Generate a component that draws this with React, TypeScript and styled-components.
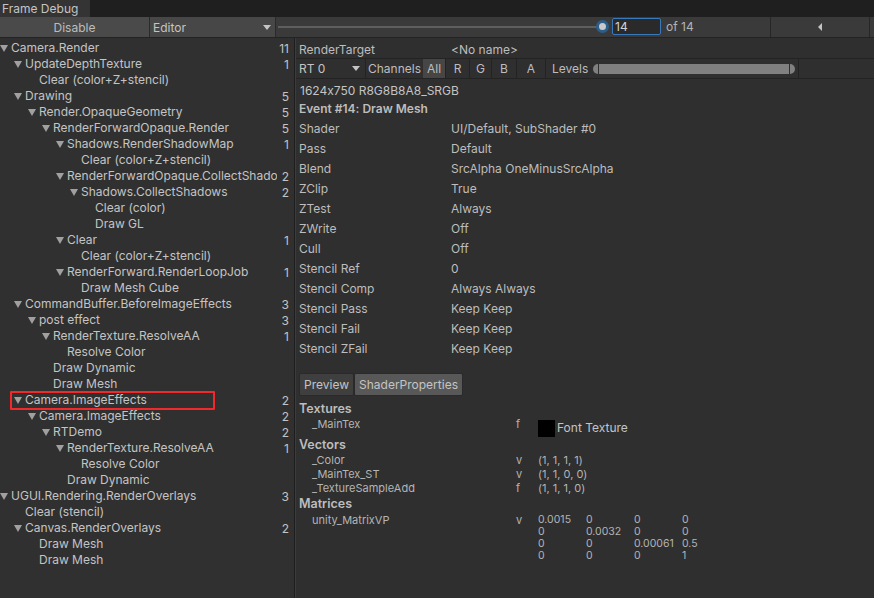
import React from "react";
import styled, { createGlobalStyle } from "styled-components";

const Global = createGlobalStyle`
  html, body { margin: 0; padding: 0; background: #2e2e2e; }
  body {
    font-family: Inter, "Noto Sans", "DejaVu Sans", sans-serif;
    font-size: 12px;
    color: #c4c4c4;
    font-feature-settings: "calt" 0;
  }
  * { box-sizing: border-box; }
`;

const Window = styled.div`
  width: 874px;
  height: 598px;
  display: flex;
  flex-direction: column;
  background: #2e2e2e;
  overflow: hidden;
`;

const TitleBar = styled.div`
  height: 17px;
  display: flex;
  background: #1f1f1f;
`;

const Tab = styled.div`
  width: 90px;
  height: 17px;
  background: #343434;
  color: #c4c4c4;
  padding-left: 2px;
  line-height: 17px;
  font-size: 12px;
`;

const Toolbar = styled.div`
  height: 21px;
  display: flex;
  align-items: stretch;
  background: #3a3a3a;
  border-bottom: 1px solid #232323;
`;

const ToolButton = styled.div<{ $w: number }>`
  width: ${(p) => p.$w}px;
  background: #4a4a4a;
  border-right: 1px solid #2a2a2a;
  color: #bcbcbc;
  display: flex;
  align-items: center;
  justify-content: center;
  font-size: 12px;
`;

const Dropdown = styled.div<{ $w: number }>`
  width: ${(p) => p.$w}px;
  background: #474747;
  border-right: 1px solid #2a2a2a;
  color: #c4c4c4;
  display: flex;
  align-items: center;
  justify-content: space-between;
  padding: 0 4px 0 3px;
  font-size: 12px;
`;

const Caret = styled.span`
  width: 0;
  height: 0;
  border-left: 4px solid transparent;
  border-right: 4px solid transparent;
  border-top: 5px solid #c4c4c4;
`;

const SliderWrap = styled.div`
  width: 336px;
  position: relative;
  display: flex;
  align-items: center;
  padding-left: 2px;
`;

const Track = styled.div`
  width: 322px;
  height: 2px;
  background: #5e5e5e;
`;

const Thumb = styled.div`
  position: absolute;
  left: 320px;
  top: 3px;
  width: 13px;
  height: 13px;
  border-radius: 50%;
  background: #c9c9c9;
  border: 3px solid #2d5d8a;
`;

const FrameInput = styled.div`
  width: 49px;
  height: 17px;
  margin-top: 1px;
  border: 1px solid #3a79bb;
  border-radius: 2px;
  background: #2a2a2a;
  color: #d2d2d2;
  padding-left: 2px;
  line-height: 15px;
  font-size: 12px;
`;

const OfLabel = styled.div`
  width: 109px;
  padding-left: 5px;
  line-height: 20px;
  color: #b4b4b4;
`;

const NavButton = styled.div<{ $w: number }>`
  width: ${(p) => p.$w}px;
  border-left: 1px solid #262626;
  display: flex;
  align-items: center;
  justify-content: center;
`;

const LeftTri = styled.span`
  width: 0;
  height: 0;
  border-top: 4px solid transparent;
  border-bottom: 4px solid transparent;
  border-right: 4px solid #c4c4c4;
`;

const Main = styled.div`
  flex: 1;
  display: flex;
  min-height: 0;
`;

const TreePanel = styled.div`
  width: 295px;
  background: #303030;
  border-right: 1px solid #1e1e1e;
  padding-top: 2px;
`;

const Row = styled.div<{ $level: number }>`
  height: 16px;
  display: flex;
  align-items: center;
  padding-left: ${(p) => p.$level * 14}px;
  position: relative;
`;

const Arrow = styled.span<{ $hidden?: boolean }>`
  width: 8px;
  flex: none;
  height: 0;
  border-left: 4px solid transparent;
  border-right: 4px solid transparent;
  border-top: 7px solid ${(p) => (p.$hidden ? "transparent" : "#a0a0a0")};
  margin-right: 3px;
`;

const Label = styled.span`
  flex: 1;
  min-width: 0;
  overflow: hidden;
  white-space: nowrap;
  color: #c4c4c4;
  font-size: 12px;
  line-height: 16px;
`;

const Count = styled.span`
  flex: none;
  min-width: 8px;
  margin-left: 4px;
  text-align: right;
  padding-right: 5px;
  color: #c4c4c4;
  box-sizing: content-box;
`;

const Highlight = styled.div`
  position: absolute;
  left: 10px;
  top: -1px;
  width: 205px;
  height: 19px;
  border: 2px solid #f02a2a;
  border-radius: 1px;
`;

const Detail = styled.div`
  flex: 1;
  display: flex;
  flex-direction: column;
  background: #2f2f2f;
  border-left: 1px solid #3c3c3c;
  padding-top: 2px;
`;

const TargetRow = styled.div`
  height: 19px;
  display: flex;
  align-items: center;
  border-bottom: 1px solid #232323;
  padding-left: 3px;
  padding-top: 1px;
`;

const PropLabel = styled.span`
  width: 152px;
  flex: none;
  color: #bdbdbd;
`;

const PropValue = styled.span`
  color: #bdbdbd;
  white-space: nowrap;
`;

const RTBar = styled.div`
  height: 20px;
  display: flex;
  align-items: stretch;
  border-bottom: 1px solid #232323;
`;

const RTDrop = styled.div`
  width: 70px;
  display: flex;
  align-items: center;
  justify-content: space-between;
  padding: 0 5px 0 3px;
  border-right: 1px solid #232323;
`;

const ChannelsLabel = styled.div`
  width: 57px;
  display: flex;
  align-items: center;
  padding-left: 2px;
  color: #bdbdbd;
`;

const ChanBtn = styled.div<{ $w: number; $on?: boolean }>`
  width: ${(p) => p.$w}px;
  display: flex;
  align-items: center;
  justify-content: center;
  background: ${(p) => (p.$on ? "#464646" : "transparent")};
  border-right: 1px solid #232323;
  color: #bdbdbd;
`;

const LevelsBox = styled.div`
  width: 253px;
  display: flex;
  align-items: center;
  padding-left: 6px;
  border-right: 1px solid #232323;
  color: #bdbdbd;
`;

const LevelsBar = styled.div`
  margin-left: 5px;
  width: 202px;
  height: 10px;
  border-radius: 5px;
  background: #808080;
  position: relative;
  &::before,
  &::after {
    content: "";
    position: absolute;
    top: 0;
    width: 1px;
    height: 10px;
    background: #2f2f2f;
  }
  &::before { left: 5px; }
  &::after { right: 5px; }
`;

const Info = styled.div`
  padding-left: 4px;
  height: 19px;
  line-height: 19px;
  margin-top: 2px;
  color: #c4c4c4;
`;

const EventTitle = styled.div`
  padding-left: 3px;
  height: 18px;
  line-height: 18px;
  font-weight: 600;
  color: #bdbdbd;
`;

const PropRow = styled.div`
  height: 20px;
  display: flex;
  align-items: center;
  padding-left: 3px;
`;

const Tabs = styled.div`
  display: flex;
  margin: 15px 0 0 3px;
  height: 23px;
`;

const TabBtn = styled.div<{ $on?: boolean }>`
  padding: 0 4px;
  display: flex;
  align-items: center;
  background: ${(p) => (p.$on ? "#585858" : "#3f3f3f")};
  border: 1px solid #2a2a2a;
  border-radius: 2px;
  color: #c4c4c4;
  font-size: 12px;
`;

const Section = styled.div<{ $mt?: number }>`
  padding-left: 3px;
  height: 16px;
  line-height: 16px;
  margin-top: ${(p) => p.$mt ?? 0}px;
  font-weight: 600;
  color: #bdbdbd;
  font-size: 12.5px;
`;

const ShaderRow = styled.div<{ $h: number; $pt?: number }>`
  display: grid;
  grid-template-columns: 204px 22px 1fr;
  padding-left: 16px;
  padding-top: ${(p) => p.$pt ?? 0}px;
  min-height: ${(p) => p.$h}px;
  align-items: start;
  font-size: 11px;
  color: #b4b4b4;
  line-height: 14px;
`;

const TexValue = styled.div`
  display: flex;
  align-items: center;
  gap: 2px;
  height: 20px;
  font-size: 12px;
  color: #c4c4c4;
  padding-top: 2px;
`;

const Swatch = styled.span`
  width: 17px;
  height: 17px;
  background: #000;
  display: inline-block;
`;

const Matrix = styled.div`
  display: grid;
  grid-template-columns: 48px 48px 48px 48px;
  line-height: 12px;
  padding-top: 1px;
  font-size: 10.5px;
`;

type Node = { l: number; t: string; c?: number; leaf?: boolean; hl?: boolean };

const tree: Node[] = [
  { l: 0, t: "Camera.Render", c: 11 },
  { l: 1, t: "UpdateDepthTexture", c: 1 },
  { l: 2, t: "Clear (color+Z+stencil)", leaf: true },
  { l: 1, t: "Drawing", c: 5 },
  { l: 2, t: "Render.OpaqueGeometry", c: 5 },
  { l: 3, t: "RenderForwardOpaque.Render", c: 5 },
  { l: 4, t: "Shadows.RenderShadowMap", c: 1 },
  { l: 5, t: "Clear (color+Z+stencil)", leaf: true },
  { l: 4, t: "RenderForwardOpaque.CollectShadows", c: 2 },
  { l: 5, t: "Shadows.CollectShadows", c: 2 },
  { l: 6, t: "Clear (color)", leaf: true },
  { l: 6, t: "Draw GL", leaf: true },
  { l: 4, t: "Clear", c: 1 },
  { l: 5, t: "Clear (color+Z+stencil)", leaf: true },
  { l: 4, t: "RenderForward.RenderLoopJob", c: 1 },
  { l: 5, t: "Draw Mesh Cube", leaf: true },
  { l: 1, t: "CommandBuffer.BeforeImageEffects", c: 3 },
  { l: 2, t: "post effect", c: 3 },
  { l: 3, t: "RenderTexture.ResolveAA", c: 1 },
  { l: 4, t: "Resolve Color", leaf: true },
  { l: 3, t: "Draw Dynamic", leaf: true },
  { l: 3, t: "Draw Mesh", leaf: true },
  { l: 1, t: "Camera.ImageEffects", c: 2, hl: true },
  { l: 2, t: "Camera.ImageEffects", c: 2 },
  { l: 3, t: "RTDemo", c: 2 },
  { l: 4, t: "RenderTexture.ResolveAA", c: 1 },
  { l: 5, t: "Resolve Color", leaf: true },
  { l: 4, t: "Draw Dynamic", leaf: true },
  { l: 0, t: "UGUI.Rendering.RenderOverlays", c: 3 },
  { l: 1, t: "Clear (stencil)", leaf: true },
  { l: 1, t: "Canvas.RenderOverlays", c: 2 },
  { l: 2, t: "Draw Mesh", leaf: true },
  { l: 2, t: "Draw Mesh", leaf: true },
];

const props: [string, string][] = [
  ["Shader", "UI/Default, SubShader #0"],
  ["Pass", "Default"],
  ["Blend", "SrcAlpha OneMinusSrcAlpha"],
  ["ZClip", "True"],
  ["ZTest", "Always"],
  ["ZWrite", "Off"],
  ["Cull", "Off"],
  ["Stencil Ref", "0"],
  ["Stencil Comp", "Always Always"],
  ["Stencil Pass", "Keep Keep"],
  ["Stencil Fail", "Keep Keep"],
  ["Stencil ZFail", "Keep Keep"],
];

const matrix = [
  ["0.0015", "0", "0", "0"],
  ["0", "0.0032", "0", "0"],
  ["0", "0", "0.00061", "0.5"],
  ["0", "0", "0", "1"],
];

export default function App() {
  return (
    <Window>
      <Global />
      <TitleBar>
        <Tab>Frame Debug</Tab>
      </TitleBar>
      <Toolbar>
        <ToolButton $w={150}>Disable</ToolButton>
        <Dropdown $w={126}>
          Editor
          <Caret />
        </Dropdown>
        <SliderWrap>
          <Track />
          <Thumb />
        </SliderWrap>
        <FrameInput>14</FrameInput>
        <OfLabel>of 14</OfLabel>
        <NavButton $w={99}>
          <LeftTri />
        </NavButton>
        <NavButton $w={4} />
      </Toolbar>
      <Main>
        <TreePanel>
          {tree.map((n, i) => (
            <Row key={i} $level={n.l}>
              <Arrow $hidden={n.leaf} />
              <Label>{n.t}</Label>
              <Count>{n.c ?? ""}</Count>
              {n.hl && <Highlight />}
            </Row>
          ))}
        </TreePanel>
        <Detail>
          <TargetRow>
            <PropLabel>RenderTarget</PropLabel>
            <PropValue>&lt;No name&gt;</PropValue>
          </TargetRow>
          <RTBar>
            <RTDrop>
              RT 0
              <Caret />
            </RTDrop>
            <ChannelsLabel>Channels</ChannelsLabel>
            <ChanBtn $w={23} $on>All</ChanBtn>
            <ChanBtn $w={24}>R</ChanBtn>
            <ChanBtn $w={22}>G</ChanBtn>
            <ChanBtn $w={25}>B</ChanBtn>
            <ChanBtn $w={29}>A</ChanBtn>
            <LevelsBox>
              Levels
              <LevelsBar />
            </LevelsBox>
          </RTBar>
          <Info>1624x750 R8G8B8A8_SRGB</Info>
          <EventTitle>Event #14: Draw Mesh</EventTitle>
          {props.map(([k, v]) => (
            <PropRow key={k}>
              <PropLabel>{k}</PropLabel>
              <PropValue>{v}</PropValue>
            </PropRow>
          ))}
          <Tabs>
            <TabBtn>Preview</TabBtn>
            <TabBtn $on>ShaderProperties</TabBtn>
          </Tabs>
          <Section $mt={5}>Textures</Section>
          <ShaderRow $h={20}>
            <span>_MainTex</span>
            <span>f</span>
            <TexValue>
              <Swatch />
              Font Texture
            </TexValue>
          </ShaderRow>
          <Section>Vectors</Section>
          <ShaderRow $h={14}>
            <span>_Color</span>
            <span>v</span>
            <span>(1, 1, 1, 1)</span>
          </ShaderRow>
          <ShaderRow $h={14}>
            <span>_MainTex_ST</span>
            <span>v</span>
            <span>(1, 1, 0, 0)</span>
          </ShaderRow>
          <ShaderRow $h={14}>
            <span>_TextureSampleAdd</span>
            <span>f</span>
            <span>(1, 1, 1, 0)</span>
          </ShaderRow>
          <Section $mt={1}>Matrices</Section>
          <ShaderRow $h={14} $pt={1}>
            <span>unity_MatrixVP</span>
            <span>v</span>
            <Matrix>
              {matrix.flat().map((m, i) => (
                <span key={i}>{m}</span>
              ))}
            </Matrix>
          </ShaderRow>
        </Detail>
      </Main>
    </Window>
  );
}
